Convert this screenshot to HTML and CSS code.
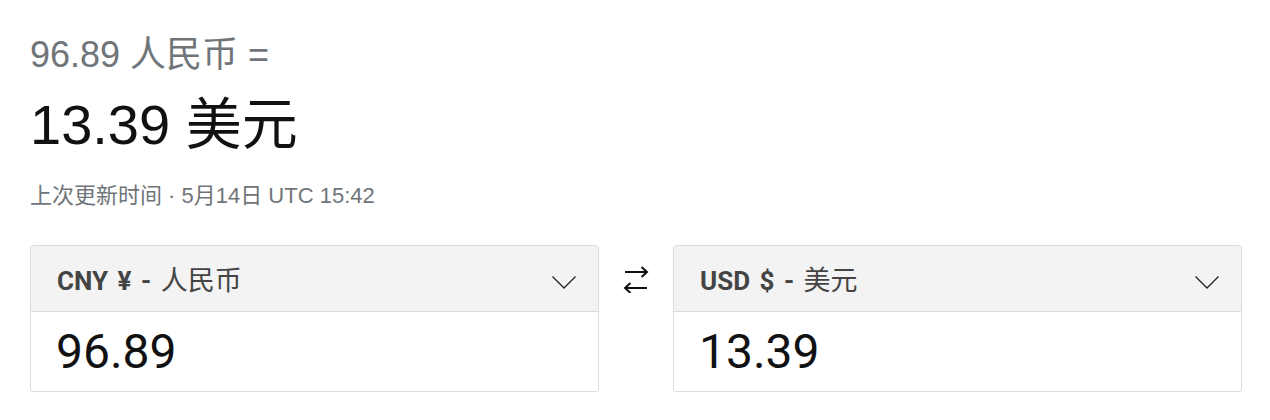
FILE: index.html
```html
<!DOCTYPE html>
<html lang="zh-CN">
<head>
  <meta charset="UTF-8">
  <meta name="viewport" content="width=device-width, initial-scale=1.0">
  <title>货币换算</title>
  <link rel="stylesheet" href="styles.css">
</head>
<body>

<div class="converter">
  <div class="source">96.89 人民币 =</div>
  <div class="result">13.39 美元</div>
  <div class="updated">上次更新时间 · 5月14日 UTC 15:42</div>

  <div class="row">
    <div class="box">
      <div class="box-head">
        <span class="label"><b>CNY ¥ -</b> <span class="cjk">人民币</span></span>
        <svg class="chevron" width="24" height="13" viewBox="0 0 24 13"><path d="M0.5 0.5 L12 12 L23.5 0.5" fill="none" stroke="#222" stroke-width="1.3"/></svg>
      </div>
      <div class="box-value">96.89</div>
    </div>

    <div class="swap">
      <svg width="26" height="28" viewBox="0 0 26 28">
        <path d="M2 7 H24 M18.5 2 L24 7 L18.5 12" fill="none" stroke="#111" stroke-width="2"/>
        <path d="M24 23 H2 M7.5 18 L2 23 L7.5 28" fill="none" stroke="#111" stroke-width="2"/>
      </svg>
    </div>

    <div class="box">
      <div class="box-head">
        <span class="label"><b>USD $ -</b> <span class="cjk">美元</span></span>
        <svg class="chevron" width="24" height="13" viewBox="0 0 24 13"><path d="M0.5 0.5 L12 12 L23.5 0.5" fill="none" stroke="#222" stroke-width="1.3"/></svg>
      </div>
      <div class="box-value">13.39</div>
    </div>
  </div>
</div>

</body>
</html>
```

FILE: styles.css
```css
body {
  margin: 0;
  background: #ffffff;
  font-family: "Liberation Sans", Arial, "Noto Sans CJK SC", sans-serif;
}

.converter {
  padding: 35px 0 0 30px;
}

.source {
  font-size: 36px;
  line-height: 40px;
  color: #70757a;
}

.result {
  margin-top: 18px;
  font-size: 56px;
  line-height: 64px;
  color: #111;
}

.updated {
  margin-top: 27px;
  font-size: 22px;
  line-height: 24px;
  color: #70757a;
}

.row {
  margin-top: 37px;
  width: 1212px;
  display: grid;
  grid-template-columns: 1fr 74px 1fr;
}

.box {
  border: 1px solid #dcdcdc;
  border-radius: 3px;
  overflow: hidden;
}

.box-head {
  height: 65px;
  background: #f3f3f3;
  border-bottom: 1px solid #dcdcdc;
  display: flex;
  align-items: center;
  justify-content: space-between;
  padding: 0 22px 0 26px;
}

.label {
  font-family: Roboto, "Noto Sans CJK SC", sans-serif;
  font-size: 26px;
  word-spacing: 3px;
  color: #444;
}

.label b {
  font-weight: bold;
}

.label .cjk {
  font-size: 27px;
}

.chevron {
  margin-top: 8px;
}

.box-value {
  height: 79px;
  display: flex;
  align-items: center;
  padding-left: 25px;
  font-family: Roboto, "Noto Sans CJK SC", sans-serif;
  font-size: 48px;
  color: #111;
}

.swap {
  display: flex;
  justify-content: center;
  padding-top: 20px;
}
```
